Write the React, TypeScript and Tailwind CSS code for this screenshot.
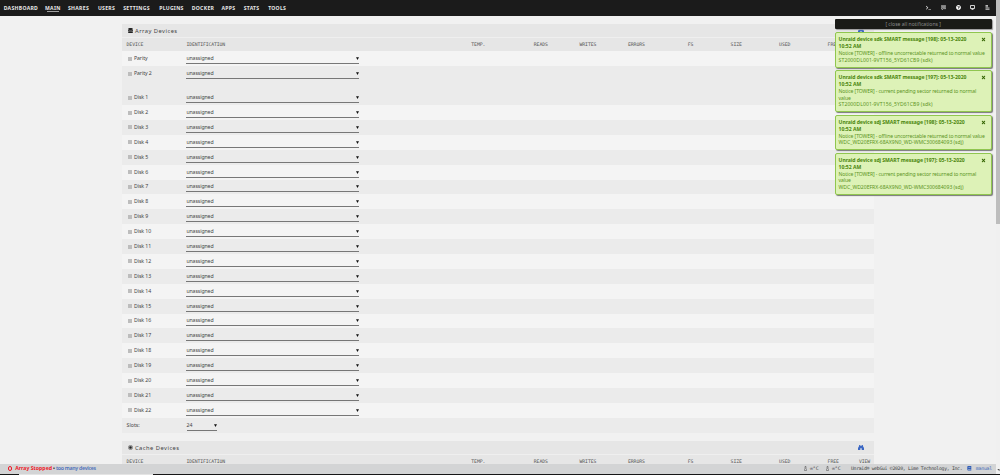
import {
  FaDatabase,
  FaQuestionCircle,
  FaTerminal,
  FaBook,
  FaTimes,
} from "react-icons/fa";

const menu = [
  { name: "DASHBOARD", width: "w-[41.3px]" },
  { name: "MAIN", width: "w-[23px]" },
  { name: "SHARES", width: "w-[29.9px]" },
  { name: "USERS", width: "w-[25.3px]" },
  { name: "SETTINGS", width: "w-[36px]" },
  { name: "PLUGINS", width: "w-[32.6px]" },
  { name: "DOCKER", width: "w-[29.7px]" },
  { name: "APPS", width: "w-[22.2px]" },
  { name: "STATS", width: "w-[24.5px]" },
  { name: "TOOLS", width: "w-[20px]" },
];

const columns = ["READS", "WRITES", "ERRORS", "FS", "SIZE", "USED", "FREE"];

const disks = Array.from({ length: 22 }, (_, i) => `Disk ${i + 1}`);

const notices = [
  {
    title: "Unraid device sdk SMART message [198]: 05-13-2020",
    lines: ["Notice [TOWER] - offline uncorrectable returned to normal value"],
    disk: "ST2000DL001-9VT156_5YD61CB9 (sdk)",
    diskSpacing: "tracking-[0.08px]",
  },
  {
    title: "Unraid device sdk SMART message [197]: 05-13-2020",
    lines: ["Notice [TOWER] - current pending sector returned to normal", "value"],
    disk: "ST2000DL001-9VT156_5YD61CB9 (sdk)",
    diskSpacing: "tracking-[0.08px]",
  },
  {
    title: "Unraid device sdj SMART message [198]: 05-13-2020",
    lines: ["Notice [TOWER] - offline uncorrectable returned to normal value"],
    disk: "WDC_WD20EFRX-68AX9N0_WD-WMC300684093 (sdj)",
    diskSpacing: "tracking-[-0.02px]",
  },
  {
    title: "Unraid device sdj SMART message [197]: 05-13-2020",
    lines: ["Notice [TOWER] - current pending sector returned to normal", "value"],
    disk: "WDC_WD20EFRX-68AX9N0_WD-WMC300684093 (sdj)",
    diskSpacing: "tracking-[-0.02px]",
  },
];

function Caret() {
  return (
    <svg viewBox="0 0 6 6" className="h-[3px] w-[3px] shrink-0 fill-[#111]">
      <path d="M0 0.5h6L3 6z" />
    </svg>
  );
}

function Binoculars() {
  return (
    <svg viewBox="0 0 12 10" className="ml-auto h-[5px] w-[6px] fill-[#3c68c4]">
      <path d="M2.2 0h2.6v2h2.4V0h2.6v2L12 6v4H7.4V6.5H4.6V10H0V6l2.2-4z" />
    </svg>
  );
}

function NavBar() {
  return (
    <nav className="flex h-4 items-center bg-[#1b1b1b] pl-[3.7px] pr-[6.3px] text-[#e8e8e8]">
      {menu.map((item) => (
        <div
          key={item.name}
          className={`${item.width} shrink-0 whitespace-nowrap text-[5.1px] leading-[7px] font-bold tracking-[0.3px]`}
        >
          <span className="relative">
            {item.name}
            {item.name === "MAIN" && (
              <span className="absolute -bottom-[1.6px] left-[2px] h-[1.4px] w-[12.5px] bg-[#a0a0a0]" />
            )}
          </span>
        </div>
      ))}
      <div className="ml-auto flex items-center gap-[9.6px]">
        <FaTerminal className="h-[5.4px] w-[5.4px]" />
        <svg viewBox="0 0 10 10" className="h-[5.4px] w-[5px]" fill="none" stroke="#ddd" strokeWidth="1.3">
          <path d="M.5 1h9v6h-5l-2 2V7h-2zM2 3h6M2 5h6" />
        </svg>
        <FaQuestionCircle className="h-[5px] w-[5px] text-white" />
        <svg viewBox="0 0 10 10" className="h-[5px] w-[5px]" fill="none" stroke="#fff" strokeWidth="1.6">
          <path d="M1 1h8v6H1zM3 9.2h4" />
        </svg>
        <svg viewBox="0 0 10 10" className="h-[5px] w-[5px]" fill="none" stroke="#eee" strokeWidth="1.5">
          <path d="M1 1h5M1 3.5h5M1 6h8M1 8.7h8" />
        </svg>
      </div>
    </nav>
  );
}

function TitleBar({ title, cache }: { title: string; cache?: boolean }) {
  return (
    <div className="flex h-[14px] items-center border-b border-[#efefef] bg-[#e6e6e6] pl-[5.5px] pr-[9.8px]">
      {cache ? (
        <svg viewBox="0 0 10 10" className="h-[5px] w-[5px]" fill="none" stroke="#444">
          <circle cx="5" cy="5" r="4.3" />
          <circle cx="5" cy="5" r="2.4" fill="#222" />
        </svg>
      ) : (
        <FaDatabase className="h-[5.4px] w-[5px] text-[#222]" />
      )}
      <span className="ml-[2.5px] text-[5.8px] leading-[8px] tracking-[0.45px] text-[#444]">
        {title}
      </span>
      <Binoculars />
    </div>
  );
}

function ColumnHeader({ view }: { view?: boolean }) {
  return (
    <div className="flex h-[13.2px] items-center bg-[#e6e6e6] pl-[4.6px] pr-[4px] font-['DejaVu_Sans_Mono',monospace] text-[4.8px] leading-[6px] tracking-[-0.12px] text-[#555]">
      <span className="w-[59.8px] shrink-0">DEVICE</span>
      <span className="w-[250px] shrink-0">IDENTIFICATION</span>
      <span className="w-[48.8px] shrink-0 text-right">TEMP.</span>
      <span className="w-[14px] shrink-0" />
      {columns.map((column) => (
        <span key={column} className="w-[48.5px] shrink-0 text-right">
          {column}
        </span>
      ))}
      {view && <span className="ml-auto">VIEW</span>}
    </div>
  );
}

function DiskRow({ name, light, tall }: { name: string; light?: boolean; tall?: boolean }) {
  return (
    <div className={`${light ? "bg-[#f4f4f4]" : "bg-[#ebebeb]"} ${tall ? "h-[23.8px]" : "h-[14.9px]"}`}>
      <div className="flex h-[14.9px] items-center pl-[6.4px] text-[5.2px] leading-[7px] text-[#444]">
        <span className="h-[4px] w-[4px] shrink-0 bg-[#bdbdbd]" />
        <span className="ml-[1.6px] w-[52.4px] shrink-0 tracking-[-0.08px]">{name}</span>
        <div className="mt-px flex h-[10px] w-[172.4px] items-center justify-between border-b border-[#777]">
          <span className="tracking-[-0.1px]">unassigned</span>
          <Caret />
        </div>
      </div>
    </div>
  );
}

function Notifications() {
  return (
    <div className="absolute top-[18.6px] left-[834.6px] w-[157.2px] text-[5.1px] leading-[6.8px]">
      <div className="mb-[3px] h-[10.4px] rounded-[1px] bg-[#1a1b17] text-center leading-[10px] text-[#8b8b8b] shadow-[1px_1px_1px_#999]">
        <span className="tracking-[-0.01px]">[ close all notifications ]</span>
      </div>
      {notices.map((notice, i) => (
        <div
          key={i}
          className="relative mb-[2.4px] rounded-[2px] border border-[#90c64f] bg-[#ddf2b7] pt-[3.3px] pb-[3.1px] pl-[3px] whitespace-nowrap text-[#5c9423] shadow-[1px_1px_1px_#777]"
        >
          <div className="font-bold text-[#4b860c]">
            <p className="tracking-[-0.05px]">{notice.title}</p>
            <p>10:52 AM</p>
          </div>
          {notice.lines.map((line) => (
            <p key={line} className="tracking-[-0.11px]">
              {line}
            </p>
          ))}
          <p className={notice.diskSpacing}>{notice.disk}</p>
          <FaTimes className="absolute top-[4px] right-[5px] h-[5px] w-[5px] text-[#326200]" />
        </div>
      ))}
    </div>
  );
}

function Thermometer() {
  return (
    <svg viewBox="0 0 6 10" className="h-[5px] w-[3px]" fill="none" stroke="#444">
      <path d="M2 1h2v5l1 1v2H1V7l1-1z" />
    </svg>
  );
}

function Footer() {
  return (
    <footer className="absolute top-[463.6px] left-0 w-[996px]">
      <div className="flex h-[10.2px] items-center bg-[#d3d4d5] pr-[4px] pl-[7.6px] text-[5.2px] leading-[7px]">
        <span className="h-[4.6px] w-[4.6px] rounded-full border-[1.3px] border-[#ee1a28]" />
        <span className="ml-[3px] font-bold text-[#ee1a28]">Array Stopped</span>
        <span className="mx-[1px] font-bold text-[#444]">•</span>
        <span className="font-semibold tracking-[-0.26px] text-[#486dba]">too many devices</span>
        <div className="ml-auto flex items-center font-['DejaVu_Sans_Mono',monospace] text-[4.8px] whitespace-nowrap text-[#444]">
          <Thermometer />
          <span className="ml-[3px] w-[16px]">∞°C</span>
          <Thermometer />
          <span className="ml-[3px] w-[19px]">∞°C</span>
          <span className="tracking-[-0.3px]">Unraid® webGui ©2020, Lime Technology, Inc.</span>
          <FaBook className="ml-[5px] h-[4.6px] w-[4.6px] text-[#315eb8]" />
          <span className="ml-[4px] tracking-[-0.2px] text-[#486dba]">manual</span>
        </div>
      </div>
      <div className="flex h-[1.4px] w-[1000px] bg-[#161616]">
        <div className="ml-[19px] w-[134px] bg-[#e4e4e4]" />
      </div>
    </footer>
  );
}

export default function App() {
  return (
    <div className="relative h-[475px] w-[1000px] overflow-hidden bg-[#f1f1f1] font-['Noto_Sans',sans-serif]">
      <div className="flex">
        <div className="w-[996px]">
          <NavBar />
          <main className="mt-[8.3px] ml-[122px] w-[752px]">
            <TitleBar title="Array Devices" />
            <ColumnHeader />
            <DiskRow name="Parity" light />
            <DiskRow name="Parity 2" tall />
            {disks.map((disk, i) => (
              <DiskRow key={disk} name={disk} light={i % 2 === 1} />
            ))}
            <div className="mb-[8.3px] flex h-[15.3px] items-center bg-[#ebebeb] pl-[4.6px] text-[5.2px] leading-[7px] text-[#444]">
              <span className="w-[60px]">Slots:</span>
              <div className="mt-px flex h-[10.4px] w-[30px] items-center justify-between border-b border-[#777]">
                <span>24</span>
                <Caret />
              </div>
            </div>
            <TitleBar title="Cache Devices" cache />
            <ColumnHeader view />
          </main>
        </div>
        <div className="flex h-[475px] w-1 flex-col justify-between bg-[#f0f0f0]">
          <div className="h-[224px] bg-[#bdbdbd]" />
          <svg viewBox="0 0 4 4" className="mb-[3px] h-[3px] w-[4px] fill-[#555]">
            <path d="M1 0h3v3z" />
          </svg>
        </div>
      </div>
      <Notifications />
      <Footer />
    </div>
  );
}
